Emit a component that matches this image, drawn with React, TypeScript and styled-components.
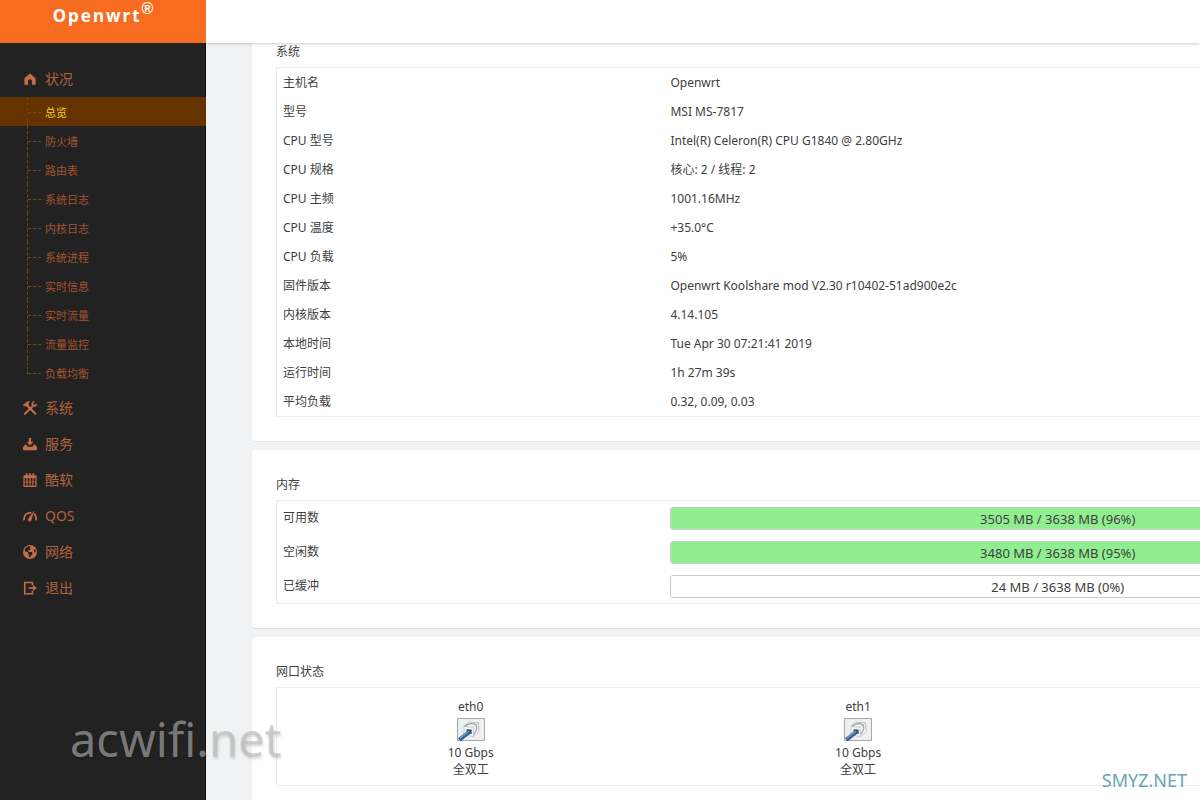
import React from "react";
import styled, { createGlobalStyle } from "styled-components";
import { FaEarthAmericas } from "react-icons/fa6";

const GlobalStyle = createGlobalStyle`
  *, *::before, *::after { box-sizing: border-box; }
  body {
    margin: 0;
    background: #f0f2f3;
    color: #404040;
    font-family: "Noto Sans", "Noto Sans CJK SC", sans-serif;
    font-size: 12px;
    line-height: 18px;
  }
`;

const Shell = styled.div`
  display: flex;
  height: 100vh;
  position: relative;
  overflow: hidden;
`;

const Sidebar = styled.aside`
  flex: 0 0 206px;
  background: #222;
  border-right: 1px solid #111;
`;

const Brand = styled.a`
  display: flex;
  justify-content: center;
  align-items: flex-start;
  height: 43px;
  margin-right: -1px;
  background: #f76c21;
  color: #fff;
  font-size: 17px;
  font-weight: 700;
  line-height: 32px;
  letter-spacing: 2px;
  text-decoration: none;

  sup {
    font-family: "Liberation Sans", sans-serif;
    font-size: 16px;
    line-height: 18px;
    letter-spacing: 0;
  }
`;

const Menu = styled.ul`
  list-style: none;
  margin: 0;
  padding: 18px 0 0;
`;

const MenuLink = styled.a`
  display: flex;
  align-items: center;
  gap: 7px;
  height: 36px;
  padding-left: 22px;
  color: #b0623f;
  font-size: 14px;
  text-decoration: none;

  svg {
    width: 16px;
    height: 16px;
    padding: 1px;
    color: #c56d49;
  }
`;

const SubMenu = styled.ul`
  list-style: none;
  margin: 0 -1px 0 0;
  padding: 0 0 3px;
`;

const SubItem = styled.li<{ $last: boolean }>`
  position: relative;

  &::before {
    content: "";
    position: absolute;
    left: 27px;
    top: 0;
    height: ${(p) => (p.$last ? "16px" : "29px")};
    border-left: 1px dashed #6b4a10;
  }
  &::after {
    content: "";
    position: absolute;
    left: 28px;
    top: 15px;
    width: 13px;
    border-top: 1px dashed #6b4a10;
  }
`;

const SubLink = styled.a<{ $active: boolean }>`
  display: flex;
  align-items: center;
  height: 29px;
  padding: 3px 0 0 45px;
  background: ${(p) => (p.$active ? "#663300" : "transparent")};
  color: ${(p) => (p.$active ? "#f3d41b" : "#a5532f")};
  font-size: 11px;
  text-decoration: none;
`;

const Main = styled.div`
  flex: 1;
  min-width: 0;
  overflow: hidden;
`;

const TopBar = styled.header`
  position: relative;
  height: 43px;
  background: #fff;
  box-shadow: 0 1px 3px rgba(0, 0, 0, 0.2);
`;

const Content = styled.main`
  display: flex;
  flex-direction: column;
  gap: 8px;
  min-width: 1316px;
  padding: 0 46px;
`;

const Card = styled.section<{ $first?: boolean }>`
  padding: ${(p) => (p.$first ? "0" : "26px")} 24px 24px;
  border-bottom: 1px solid #dfe1e2;
  border-radius: ${(p) => (p.$first ? "0 0 4px 4px" : "4px")};
  background: #fff;
`;

const CardTitle = styled.h2`
  margin: 0 0 6px;
  font-size: 12px;
  font-weight: 400;
  line-height: 18px;
`;

const Panel = styled.div`
  border: 1px solid #ebeded;
`;

const InfoTable = styled.table`
  width: 100%;
  border-collapse: collapse;
  table-layout: fixed;
`;

const Label = styled.th`
  width: 33%;
  padding: 0 6px;
  font-weight: 400;
  text-align: left;
`;

const Value = styled.td<{ $tall?: boolean }>`
  height: ${(p) => (p.$tall ? "34px" : "29px")};
  padding: 0 6px;
`;

const Meter = styled.div`
  position: relative;
  height: 23px;
  border: 1px solid #c9cccc;
  border-radius: 3px;
  background: #fff;
  font-size: 13px;
  line-height: 22px;
  text-align: center;
  overflow: hidden;
`;

const MeterFill = styled.div`
  position: absolute;
  inset: 0 auto 0 0;
  background: #90ee90;
`;

const MeterText = styled.span`
  position: relative;
`;

const Ports = styled.div`
  display: grid;
  grid-template-columns: 33% 33% 33%;
  padding: 10px 0 7px;
`;

const Port = styled.div`
  display: flex;
  flex-direction: column;
  align-items: center;
  line-height: 17px;

  svg {
    width: 28px;
    height: 23px;
    margin: 3px 0;
  }
`;

const Watermark = styled.div`
  position: absolute;
  left: 70px;
  bottom: 30px;
  color: rgba(183, 183, 183, 0.6);
  font-size: 47px;
  line-height: 62px;
  text-shadow: 1px 2px 3px rgba(0, 0, 0, 0.15);
  pointer-events: none;
`;

const SiteMark = styled.div`
  position: absolute;
  right: 13px;
  bottom: 8px;
  color: #67a5b3;
  font-size: 18px;
  line-height: 24px;
  pointer-events: none;
`;

const HomeIcon = () => (
  <svg viewBox="0 0 16 16" fill="currentColor" aria-hidden="true">
    <path d="M8 1.600 1.600 7v7.600h4.200V10.600a2.200 2.200 0 0 1 4.400 0v4h4.200V7z" />
  </svg>
);

const ToolsIcon = () => (
  <svg viewBox="1 1 14 14" fill="none" stroke="currentColor" aria-hidden="true">
    <path d="m5 5.200 8.800 9M2.200 14.400 10.800 6.200" strokeWidth="2" />
    <path d="M1 5 5.600 1.400H7.800L6.400 3.200 6.600 4.600 4.600 6.600 3.200 5.600 2 6.200z" fill="currentColor" strokeWidth=".4" />
    <path d="M12.600 1.300C10.800.9 9.300 2.400 9.500 4.300c.2 1.900 2.300 3 3.900 2.300 1.200-.5 1.800-1.800 1.500-3.100l-2 1.600-1.500-.5-.4-1.500z" fill="currentColor" strokeWidth=".2" />
  </svg>
);

const InboxIcon = () => (
  <svg viewBox="0 0 16 16" fill="currentColor" aria-hidden="true">
    <path d="M6.700 1h2.600v4.500h2.800L8 9.800 3.900 5.500h2.800z" />
    <path d="M2.600 8.600 4.400 9l.6 2h6l.6-2 1.800-.4L16 11.300v3a.9.9 0 0 1-.9.900H.9a.9.9 0 0 1-.9-.9v-3z" />
  </svg>
);

const CalendarIcon = () => (
  <svg viewBox="1 0 15 16" fill="none" stroke="currentColor" aria-hidden="true">
    <path d="M1.700 3.500h13.600v11.700H1.700z" strokeWidth="1.400" />
    <path d="M1.700 4.300h13.600" strokeWidth="3" />
    <path d="M4.700.2v3M8.500.2v3M12.300.2v3" strokeWidth="2" />
    <path d="M5.100 5v10M8.500 5v10M11.900 5v10" strokeWidth="1.300" />
    <path d="M1.700 10.300h13.600" strokeWidth=".8" />
  </svg>
);

const GaugeIcon = () => (
  <svg viewBox="0 0 16 16" fill="none" stroke="currentColor" aria-hidden="true">
    <path d="M1.100 13C.8 7 4.200 4 9.700 4M12.900 5.400c1.700 1.700 2.300 4.200 2 7.600" strokeWidth="2" />
    <path d="M12.600 2.300 9.600 12a1.900 1.900 0 1 1-3.200-1.200z" fill="currentColor" strokeWidth=".4" />
  </svg>
);

const LogoutIcon = () => (
  <svg viewBox="0 0 16 16" fill="none" stroke="currentColor" aria-hidden="true">
    <path d="M10.800 5V1.700H2v12.800h8.800V11" strokeWidth="1.800" />
    <path d="M6.200 8h7" strokeWidth="1.800" />
    <path d="m11.500 4.700 4.300 3.300-4.300 3.300z" fill="currentColor" stroke="none" />
  </svg>
);

const PortIcon = () => (
  <svg viewBox="0 0 28 23" fill="none" aria-hidden="true">
    <path d="M.5.5h27v22H.5z" fill="#eeefef" stroke="#a6a8a9" />
    <path d="m7 8.500 5-4.300 9.500.6.500 9.200-5.500 4.500L7 17z" fill="#fafafa" stroke="#c3c6c8" />
    <path d="m7 8.500 9.200.7L21.500 4.800M16.200 9.200l.3 9.200" stroke="#c3c6c8" />
    <path d="M8 8.200c3-2.600 8-3.600 10.600-1.400 2.200 2.600 1 6.700-2 9.300" stroke="#a3a8ab" strokeWidth="1.400" />
    <path d="m9.500 11.200 5.200.3-.1 4.400-5.100-.3z" fill="#454b51" />
    <path d="m2.300 21.800 10.900-8.600" stroke="#2f5f9c" strokeWidth="4" />
    <path d="m3 20.300 8.800-7" stroke="#6f9fd4" strokeWidth="1.200" />
  </svg>
);

const statusPages = ["总览", "防火墙", "路由表", "系统日志", "内核日志", "系统进程", "实时信息", "实时流量", "流量监控", "负载均衡"];

const sections = [
  { name: "系统", icon: <ToolsIcon /> },
  { name: "服务", icon: <InboxIcon /> },
  { name: "酷软", icon: <CalendarIcon /> },
  { name: "QOS", icon: <GaugeIcon /> },
  { name: "网络", icon: <FaEarthAmericas /> },
  { name: "退出", icon: <LogoutIcon /> },
];

const systemInfo = [
  ["主机名", "Openwrt"],
  ["型号", "MSI MS-7817"],
  ["CPU 型号", "Intel(R) Celeron(R) CPU G1840 @ 2.80GHz"],
  ["CPU 规格", "核心: 2 / 线程: 2"],
  ["CPU 主频", "1001.16MHz"],
  ["CPU 温度", "+35.0°C"],
  ["CPU 负载", "5%"],
  ["固件版本", "Openwrt Koolshare mod V2.30 r10402-51ad900e2c"],
  ["内核版本", "4.14.105"],
  ["本地时间", "Tue Apr 30 07:21:41 2019"],
  ["运行时间", "1h 27m 39s"],
  ["平均负载", "0.32, 0.09, 0.03"],
];

const memory = [
  { name: "可用数", used: 3505, percent: 96 },
  { name: "空闲数", used: 3480, percent: 95 },
  { name: "已缓冲", used: 24, percent: 0 },
];

export default function App() {
  return (
    <>
      <GlobalStyle />
      <Shell>
        <Sidebar>
          <Brand href="#">
            Openwrt<sup>®</sup>
          </Brand>
          <nav>
            <Menu>
              <li>
                <MenuLink href="#status">
                  <HomeIcon />
                  状况
                </MenuLink>
                <SubMenu>
                  {statusPages.map((page, i) => (
                    <SubItem key={page} $last={i === statusPages.length - 1}>
                      <SubLink href="#status" $active={i === 0}>
                        {page}
                      </SubLink>
                    </SubItem>
                  ))}
                </SubMenu>
              </li>
              {sections.map((s) => (
                <li key={s.name}>
                  <MenuLink href="#section">
                    {s.icon}
                    {s.name}
                  </MenuLink>
                </li>
              ))}
            </Menu>
          </nav>
        </Sidebar>
        <Main>
          <TopBar />
          <Content>
            <Card $first>
              <CardTitle>系统</CardTitle>
              <Panel>
                <InfoTable>
                  <tbody>
                    {systemInfo.map(([label, value]) => (
                      <tr key={label}>
                        <Label scope="row">{label}</Label>
                        <Value>{value}</Value>
                      </tr>
                    ))}
                  </tbody>
                </InfoTable>
              </Panel>
            </Card>
            <Card>
              <CardTitle>内存</CardTitle>
              <Panel>
                <InfoTable>
                  <tbody>
                    {memory.map((m) => (
                      <tr key={m.name}>
                        <Label scope="row">{m.name}</Label>
                        <Value $tall>
                          <Meter role="progressbar" aria-label={m.name} aria-valuenow={m.percent}>
                            <MeterFill style={{ width: `${m.percent}%` }} />
                            <MeterText>
                              {`${m.used} MB / 3638 MB (${m.percent}%)`}
                            </MeterText>
                          </Meter>
                        </Value>
                      </tr>
                    ))}
                  </tbody>
                </InfoTable>
              </Panel>
            </Card>
            <Card>
              <CardTitle>网口状态</CardTitle>
              <Panel>
                <Ports>
                  {["eth0", "eth1"].map((port) => (
                    <Port key={port}>
                      <span>{port}</span>
                      <PortIcon />
                      <span>10 Gbps</span>
                      <span>全双工</span>
                    </Port>
                  ))}
                </Ports>
              </Panel>
            </Card>
          </Content>
        </Main>
        <Watermark>acwifi.net</Watermark>
        <SiteMark>SMYZ.NET</SiteMark>
      </Shell>
    </>
  );
}
